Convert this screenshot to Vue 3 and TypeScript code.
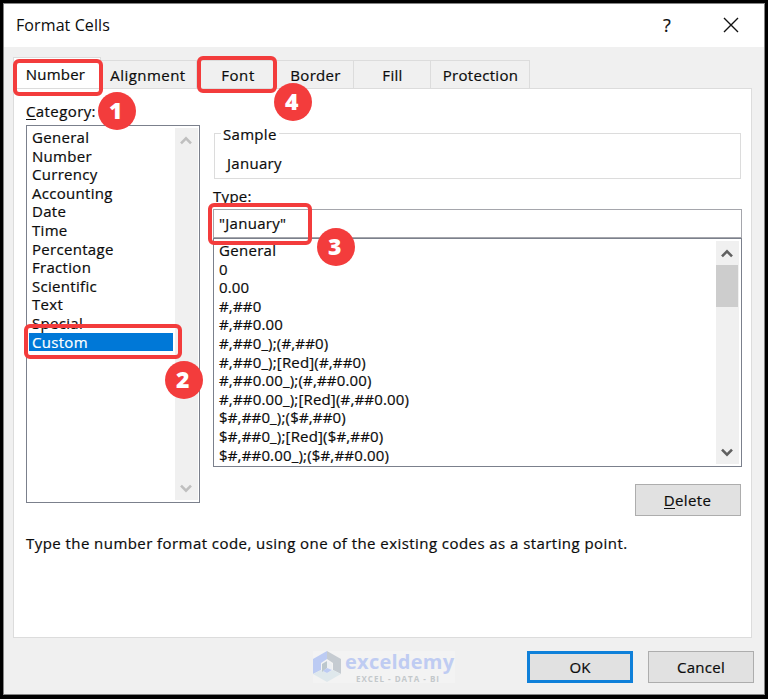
<script setup lang="ts">
interface Tab { label: string; cls: string }
interface Marker { id: number; cls: string }

const tabs: Tab[] = [
  { label: 'Number', cls: 'number' },
  { label: 'Alignment', cls: 'alignment' },
  { label: 'Font', cls: 'font' },
  { label: 'Border', cls: 'border' },
  { label: 'Fill', cls: 'fill' },
  { label: 'Protection', cls: 'protection' },
]

const categories: string[] = [
  'General', 'Number', 'Currency', 'Accounting', 'Date', 'Time',
  'Percentage', 'Fraction', 'Scientific', 'Text', 'Special', 'Custom',
]

const formats: string[] = [
  'General', '0', '0.00', '#,##0', '#,##0.00',
  '#,##0_);(#,##0)', '#,##0_);[Red](#,##0)',
  '#,##0.00_);(#,##0.00)', '#,##0.00_);[Red](#,##0.00)',
  '$#,##0_);($#,##0)', '$#,##0_);[Red]($#,##0)', '$#,##0.00_);($#,##0.00)',
]

const markers: Marker[] = [
  { id: 1, cls: 'm-number' },
  { id: 2, cls: 'm-custom' },
  { id: 3, cls: 'm-type' },
  { id: 4, cls: 'm-font' },
]
</script>

<template>
  <div class="screen">
    <div class="dialog">
      <header class="titlebar">
        <span class="title">Format Cells</span>
        <span class="help">?</span>
        <svg class="close" width="16" height="16" viewBox="0 0 16 16">
          <path d="M1 1 15 15M15 1 1 15" stroke="#111" stroke-width="1.4" fill="none" />
        </svg>
      </header>

      <nav class="tabs">
        <div v-for="t in tabs" :key="t.label" class="tab" :class="'tab-' + t.cls">
          <span>{{ t.label }}</span>
        </div>
      </nav>

      <main class="panel">
        <div class="columns">
          <section class="left">
            <div class="label cat-label"><u>C</u>ategory:</div>
            <div class="listbox cat-list">
              <ul>
                <li v-for="c in categories" :key="c" :class="{ selected: c === 'Custom' }">{{ c }}</li>
              </ul>
              <div class="scroll disabled">
                <svg width="12" height="10" viewBox="0 0 12 10"><path d="M1 8.3 6 3.3 11 8.3" /></svg>
                <svg width="12" height="10" viewBox="0 0 12 10"><path d="M1 1.7 6 6.7 11 1.7" /></svg>
              </div>
            </div>
          </section>

          <section class="right">
            <div class="group">
              <span class="legend">Sample</span>
              <span class="sample">January</span>
            </div>
            <div class="label type-label"><u>T</u>ype:</div>
            <div class="input">"January"</div>
            <div class="listbox type-list">
              <ul>
                <li v-for="(f, i) in formats" :key="f" :class="{ code: i > 0 }">{{ f }}</li>
              </ul>
              <div class="scroll">
                <svg width="12" height="10" viewBox="0 0 12 10"><path d="M1 8.3 6 3.3 11 8.3" /></svg>
                <div class="thumb"></div>
                <svg width="12" height="10" viewBox="0 0 12 10"><path d="M1 1.7 6 6.7 11 1.7" /></svg>
              </div>
            </div>
            <div class="btn delete"><span><u>D</u>elete</span></div>
          </section>
        </div>
        <p class="hint">Type the number format code, using one of the existing codes as a starting point.</p>
      </main>

      <footer class="footer">
        <div class="brand">
          <svg width="28" height="31" viewBox="0 0 28 31">
            <path d="M14 0 0 8v15l8-4v-7l6-4z" fill="#bccbf3" />
            <path d="M14 0 28 8v15l-8-4v-7l-6-4z" fill="#c5cbd1" />
            <path d="M0 23 8 19l6 3 6-3 8 4-14 8z" fill="#dfe8ec" />
            <path d="M9 13 14 10v7l-5 4z" fill="#bcc7cd" />
            <path d="M14 10 19 13v6l-5-2z" fill="#edf0f3" />
            <path d="M14 17 19 19l-5 3-4-2z" fill="#bccbf3" />
          </svg>
          <div class="brand-text">
            <span class="brand-name">exceldemy</span>
            <span class="brand-sub">EXCEL - DATA - BI</span>
          </div>
        </div>
        <div class="btn ok"><span>OK</span></div>
        <div class="btn cancel"><span>Cancel</span></div>
      </footer>
    </div>

    <div class="frame f-number"></div>
    <div class="frame f-font"></div>
    <div class="frame f-type"></div>
    <div class="frame f-custom"></div>
    <div v-for="m in markers" :key="m.id" class="marker" :class="m.cls">{{ m.id }}</div>
  </div>
</template>

<style>
body { margin: 0; background: #000; }
</style>

<style scoped>
* { box-sizing: border-box; }
.screen {
  position: relative;
  width: 768px;
  height: 699px;
  overflow: hidden;
  background: #000;
  padding: 3px;
  font-family: "Open Sans", "Noto Sans", sans-serif;
  font-size: 15px;
  line-height: 20px;
  letter-spacing: 0.3px;
  color: #0c0c0c;
  -webkit-text-stroke: 0.2px currentColor;
  white-space: nowrap;
}
.dialog {
  width: 762px;
  height: 692px;
  border: 1px solid #858585;
  background: #f0f0f0;
  display: flex;
  flex-direction: column;
}
.titlebar {
  height: 43px;
  flex: none;
  background: #fff;
  display: flex;
  align-items: center;
  padding: 0 25px 2px 12px;
}
.title { flex: 1; font-size: 16px; letter-spacing: 0.1px; -webkit-text-stroke: 0; }
.help { font-size: 18px; width: 12px; margin-right: 50px; text-align: center; }
.close { display: block; }
u { text-decoration: none; border-bottom: 1px solid #111; display: inline-block; line-height: 16px; }
.tabs {
  height: 41px;
  flex: none;
  display: flex;
  align-items: flex-end;
  padding-left: 9px;
}
.tab {
  height: 28px;
  border: 1px solid #dcdcdc;
  border-left: 0;
  border-bottom: 0;
  display: flex;
  justify-content: center;
  align-items: center;
  padding-top: 1px;
}
.tab-number { width: 88px; height: 31px; background: #fff; border-left: 1px solid #dcdcdc; padding-right: 3px; padding-top: 2px; letter-spacing: 0.2px; }
.tab-alignment { width: 96px; padding-right: 1px; letter-spacing: 0.45px; }
.tab-font { width: 78px; padding-left: 5px; letter-spacing: 0.6px; }
.tab-border { width: 79px; padding-left: 3px; }
.tab-fill { width: 77px; padding-left: 1px; }
.tab-protection { width: 99px; padding-left: 1px; }
.panel {
  width: 739px;
  height: 550px;
  flex: none;
  margin-left: 9px;
  border: 1px solid #dcdcdc;
  background: #fff;
  padding: 12px 9px 0 12px;
}
.columns { display: flex; gap: 13px; }
.left { width: 174px; }
.right { width: 529px; }
.cat-label { height: 24px; line-height: 20px; letter-spacing: 0.4px; }
.listbox { border: 1px solid #7b808c; display: flex; background: #fff; }
.listbox ul { list-style: none; margin: 0; flex: 1; }
.listbox li { height: 18.6px; line-height: 18.6px; }
.listbox li.code { letter-spacing: 0.17px; }
.cat-list { height: 378px; padding: 2px 1px 2px 2px; }
.cat-list ul { padding: 0; }
.cat-list li { padding-left: 3px; }
.cat-list li.selected { background: #0078d7; color: #fff; margin-right: 2px; }
.scroll {
  width: 23px;
  background: #f0f0f0;
  display: flex;
  flex-direction: column;
  align-items: flex-start;
  padding: 7px 0 6px;
}
.scroll svg { margin-left: 5px; }
.scroll path { fill: none; stroke: #606060; stroke-width: 2.6; }
.scroll.disabled path { stroke: #bfbfbf; }
.scroll svg:last-child { margin-top: auto; }
.thumb { width: 22px; height: 42px; margin-top: 7px; background: #cdcdcd; }
.group {
  height: 46px;
  width: 527px;
  border: 1px solid #dcdcdc;
  margin-top: 32px;
  margin-left: 1px;
  display: flex;
  flex-direction: column;
  align-items: flex-start;
}
.legend { background: #fff; padding: 0 2px; margin: -9px 0 0 6px; height: 19px; line-height: 19px; }
.sample { margin: 9px 0 0 12px; }
.type-label { height: 30px; padding-top: 7px; }
.input { height: 29px; border: 1px solid #a5a6ac; line-height: 27px; padding-left: 5px; }
.type-list { height: 229px; padding: 2px; }
.type-list ul { padding: 0 0 0 3px; height: 223px; }
.btn {
  width: 106px;
  height: 32px;
  background: #e1e1e1;
  border: 1px solid #adadad;
  display: flex;
  align-items: center;
  justify-content: center;
}
.delete { margin: 17px 0 0 422px; letter-spacing: 0.4px; padding-right: 1px; }
.hint { margin: 17px 0 0; line-height: 20px; letter-spacing: 0.44px; }
.footer { display: flex; align-items: flex-start; padding: 13px 0 0 309px; }
.brand { width: 142px; height: 32px; background: #f3f3f3; display: flex; gap: 4px; -webkit-text-stroke: 0; }
.brand-text { display: flex; flex-direction: column; }
.brand-name { color: #bfccf2; font: 700 20px/22px "Open Sans", sans-serif; height: 22px; letter-spacing: 0.25px; }
.brand-sub { color: #c3c8cb; font: 700 8px/9px "Open Sans", sans-serif; padding-left: 11px; letter-spacing: 1px; margin-top: 1px; }
.ok { margin-left: 72px; border: 3px solid #0f80d9; letter-spacing: 0; }
.cancel { margin-left: 15px; }
.frame { position: absolute; border: 4px solid #f33c3c; border-radius: 6px; }
.f-number { left: 13px; top: 59px; width: 90px; height: 37px; }
.f-font { left: 197px; top: 56px; width: 80px; height: 37px; }
.f-type { left: 208px; top: 203px; width: 104px; height: 42px; }
.f-custom { left: 24px; top: 324px; width: 158px; height: 35px; }
.marker {
  position: absolute;
  width: 38px;
  height: 38px;
  border-radius: 50%;
  background: #f33c3c;
  color: #fff;
  text-align: center;
  font: 800 23px/37px "Open Sans", sans-serif;
  padding-right: 2px;
  -webkit-text-stroke: 0;
}
.m-number { left: 98px; top: 92px; }
.m-font { left: 274px; top: 83px; }
.m-type { left: 317px; top: 228px; }
.m-custom { left: 165px; top: 361px; }
</style>
